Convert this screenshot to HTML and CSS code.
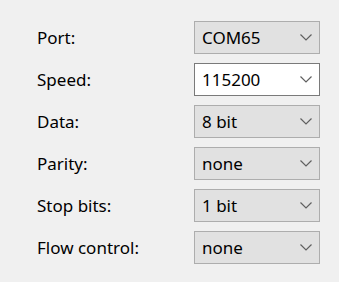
FILE: index.html
```html
<!DOCTYPE html>
<html lang="en">
<head>
  <meta charset="UTF-8">
  <title>Serial settings</title>
  <link rel="stylesheet" href="styles.css">
</head>
<body>

<div class="settings">
  <label>Port:</label>
  <div class="combo"><span>COM65</span><svg class="arrow" viewBox="0 0 12 7"><polyline points="0.5,0.5 6,6 11.5,0.5"/></svg></div>

  <label>Speed:</label>
  <div class="combo editable"><span>115200</span><svg class="arrow" viewBox="0 0 12 7"><polyline points="0.5,0.5 6,6 11.5,0.5"/></svg></div>

  <label>Data:</label>
  <div class="combo"><span>8 bit</span><svg class="arrow" viewBox="0 0 12 7"><polyline points="0.5,0.5 6,6 11.5,0.5"/></svg></div>

  <label>Parity:</label>
  <div class="combo"><span>none</span><svg class="arrow" viewBox="0 0 12 7"><polyline points="0.5,0.5 6,6 11.5,0.5"/></svg></div>

  <label>Stop bits:</label>
  <div class="combo"><span>1 bit</span><svg class="arrow" viewBox="0 0 12 7"><polyline points="0.5,0.5 6,6 11.5,0.5"/></svg></div>

  <label>Flow control:</label>
  <div class="combo"><span>none</span><svg class="arrow" viewBox="0 0 12 7"><polyline points="0.5,0.5 6,6 11.5,0.5"/></svg></div>
</div>

</body>
</html>
```

FILE: styles.css
```css
body { margin: 0; background-color: #f0f0f0; font-family: "Noto Sans", "Open Sans", sans-serif; font-size: 17px; color: #000; }
.settings { display: grid; grid-template-columns: 157px 126px; row-gap: 9px; padding: 21px 0 0 37px; }
label { display: flex; align-items: center; height: 33px; }
.combo { display: flex; align-items: center; justify-content: space-between; box-sizing: border-box; height: 33px; padding: 0 7px 0 7px; background-color: #e1e1e1; border: 1px solid #adadad; }
.combo.editable { background-color: #fff; border-color: #7a7a7a; }
.arrow { width: 12px; height: 7px; fill: none; stroke: #606060; stroke-width: 1.2; }
```
